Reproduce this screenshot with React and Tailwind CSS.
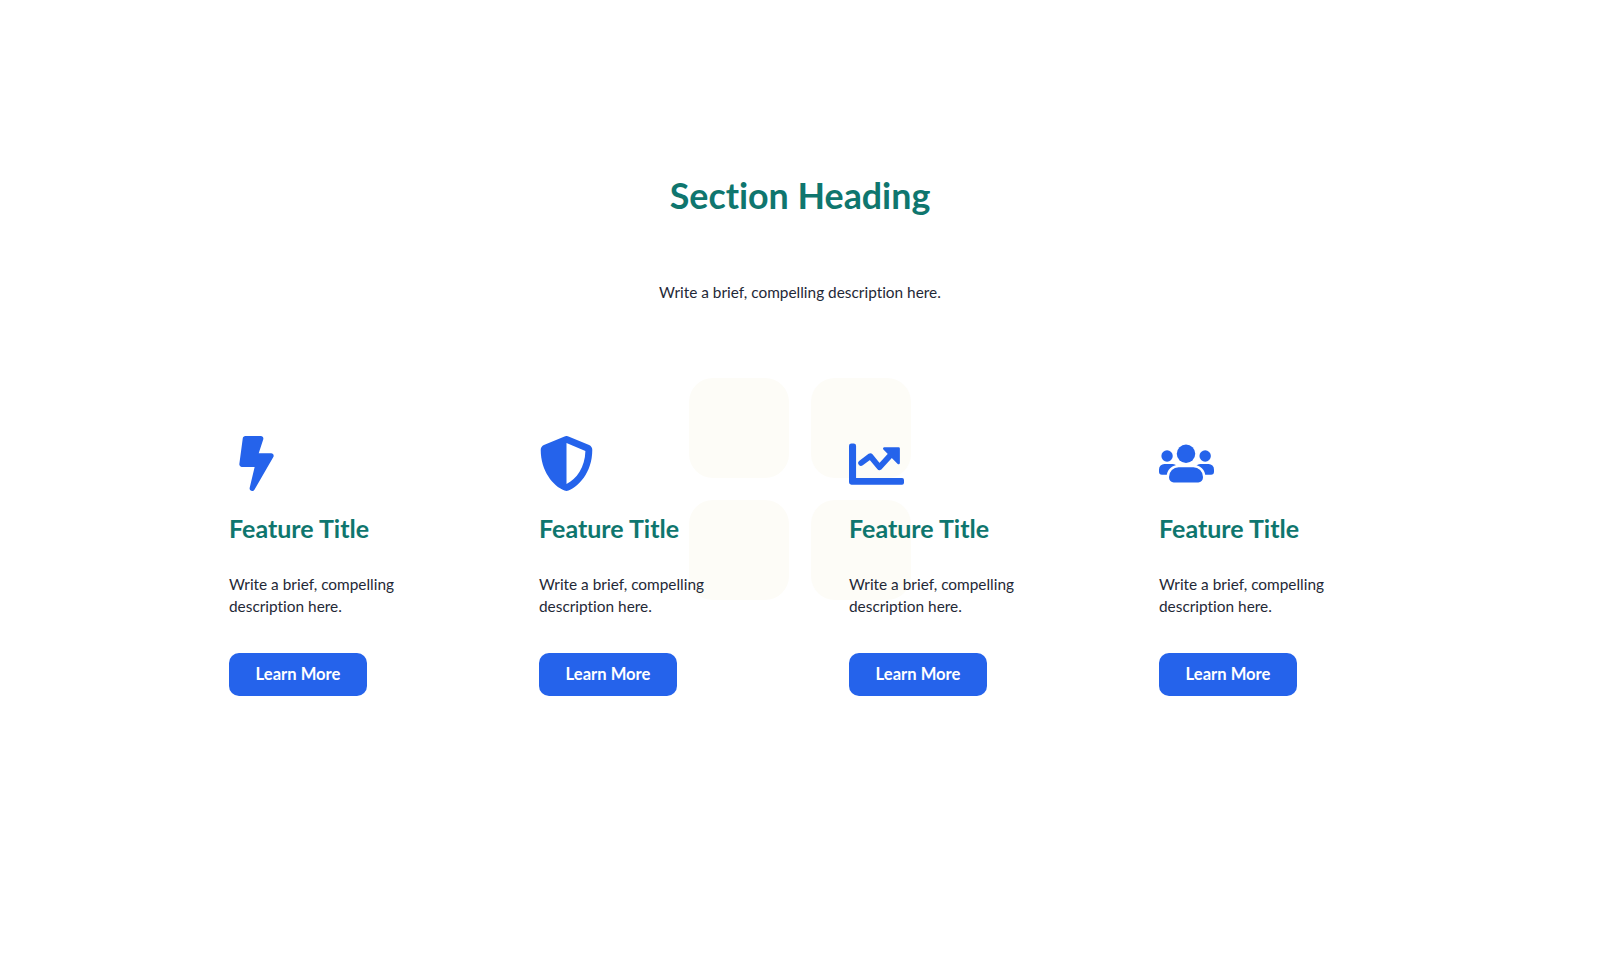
import { FaBolt, FaShieldAlt } from 'react-icons/fa';

const ChartIcon = () => (
  <svg viewBox="0 0 56 42" className="w-[55px] h-[42px]" fill="currentColor">
    <path d="M2.5 0h2.2a2.5 2.5 0 0 1 2.5 2.5v32.8H54a2 2 0 0 1 2 2V40a2 2 0 0 1-2 2H2.5A2.5 2.5 0 0 1 0 39.5v-37A2.5 2.5 0 0 1 2.5 0z" />
    <path d="M12.3 20 21.7 13 31 24.3 45 9" fill="none" stroke="currentColor" strokeWidth="5.8" strokeLinecap="round" strokeLinejoin="round" />
    <path d="M36 4h14.5a1.3 1.3 0 0 1 1.3 1.3V20a1.3 1.3 0 0 1-2.2.9L35 6.2A1.3 1.3 0 0 1 36 4z" />
  </svg>
);

const UsersIcon = () => (
  <svg viewBox="0 0 56 40" className="w-[55px] h-10" fill="currentColor">
    <circle cx="27.5" cy="9.6" r="9.4" />
    <circle cx="8.2" cy="11.8" r="5.8" />
    <circle cx="47" cy="11.8" r="5.8" />
    <path d="M5.5 20h8.5a6 6 0 0 1 4 1.6L12 31H3a3 3 0 0 1-3-3v-2.5A5.5 5.5 0 0 1 5.5 20z" />
    <path d="M50.5 20H42a6 6 0 0 0-4 1.6L44 31h9a3 3 0 0 0 3-3v-2.5A5.5 5.5 0 0 0 50.5 20z" />
    <path d="M20 22h15a11 11 0 0 1 11 11v1a6 6 0 0 1-6 6H15a6 6 0 0 1-6-6v-1a11 11 0 0 1 11-11z" stroke="#fff" strokeWidth="2.5" />
  </svg>
);

const features = [
  { id: 'speed', icon: <FaBolt className="text-[55px]" /> },
  { id: 'secure', icon: <FaShieldAlt className="text-[55px]" /> },
  { id: 'growth', icon: <ChartIcon /> },
  { id: 'team', icon: <UsersIcon /> },
];

const Feature = ({ icon }) => (
  <div className="flex flex-col items-start pl-[49px] pr-12 py-12">
    <div className="h-[55px] flex items-center text-[#2563eb]">{icon}</div>
    <h3 className="mt-[21px] text-[25px] font-bold leading-8 text-[#0f766e]">Feature Title</h3>
    <p className="mt-[29px] text-[15.4px] leading-[22px] text-[#1f2937]">Write a brief, compelling description here.</p>
    <button className="mt-9 w-[138px] h-[43px] rounded-[10px] bg-[#2563eb] text-[16.6px] font-bold text-white">Learn More</button>
  </div>
);

export default function App() {
  return (
    <div className="relative min-h-screen bg-white font-['Lato',sans-serif] [font-variant-ligatures:none] overflow-hidden">
      <div className="absolute left-1/2 top-1/2 -translate-x-1/2 -translate-y-1/2 grid grid-cols-2 gap-[22px]">
        <div className="w-[100px] h-[100px] rounded-3xl bg-[#fdfcf7]" />
        <div className="w-[100px] h-[100px] rounded-3xl bg-[#fdfcf7]" />
        <div className="w-[100px] h-[100px] rounded-3xl bg-[#fdfcf7]" />
        <div className="w-[100px] h-[100px] rounded-3xl bg-[#fdfcf7]" />
      </div>
      <div className="relative max-w-[1240px] mx-auto pt-[172px]">
        <h2 className="text-center text-[35.8px] font-bold leading-[48px] text-[#0f766e]">Section Heading</h2>
        <p className="mt-[60px] text-center text-[15.4px] leading-6 text-[#1f2937]">Write a brief, compelling description here.</p>
        <div className="mt-[84px] grid grid-cols-4">
          {features.map((f) => (
            <Feature key={f.id} icon={f.icon} />
          ))}
        </div>
      </div>
    </div>
  );
}
